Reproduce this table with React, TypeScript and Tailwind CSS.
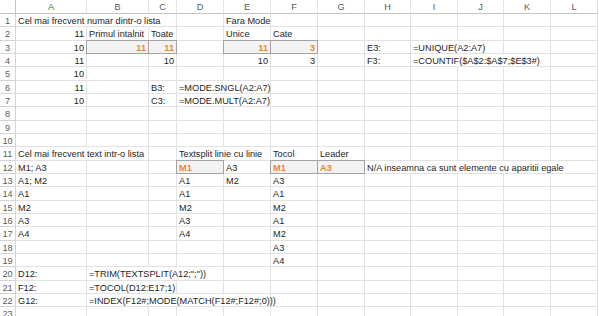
import React from 'react';

type Cell = {
	c: number;
	t: string;
	span?: number;
	num?: boolean;
	box?: boolean;
	hl?: boolean;
};

const LETTERS = ['A', 'B', 'C', 'D', 'E', 'F', 'G', 'H', 'I', 'J', 'K', 'L'];

const SPAN: Record<number, string> = {
	1: '',
	2: 'col-span-2',
	3: 'col-span-3',
	4: 'col-span-4',
	5: 'col-span-5',
};

// column index: A=0, B=1, ...
const SHEET: Record<number, Cell[]> = {
	1: [
		{c: 0, t: 'Cel mai frecvent numar dintr-o lista', span: 3},
		{c: 4, t: 'Fara Mode'},
	],
	2: [
		{c: 0, t: '11', num: true},
		{c: 1, t: 'Primul intalnit'},
		{c: 2, t: 'Toate'},
		{c: 4, t: 'Unice'},
		{c: 5, t: 'Cate'},
	],
	3: [
		{c: 0, t: '10', num: true},
		{c: 1, t: '11', num: true, box: true, hl: true},
		{c: 2, t: '11', num: true, box: true, hl: true},
		{c: 4, t: '11', num: true, box: true, hl: true},
		{c: 5, t: '3', num: true, box: true, hl: true},
		{c: 7, t: 'E3:'},
		{c: 8, t: '=UNIQUE(A2:A7)', span: 2},
	],
	4: [
		{c: 0, t: '11', num: true},
		{c: 2, t: '10', num: true},
		{c: 4, t: '10', num: true},
		{c: 5, t: '3', num: true},
		{c: 7, t: 'F3:'},
		{c: 8, t: '=COUNTIF($A$2:$A$7;$E$3#)', span: 3},
	],
	5: [{c: 0, t: '10', num: true}],
	6: [
		{c: 0, t: '11', num: true},
		{c: 2, t: 'B3:'},
		{c: 3, t: '=MODE.SNGL(A2:A7)', span: 2},
	],
	7: [
		{c: 0, t: '10', num: true},
		{c: 2, t: 'C3:'},
		{c: 3, t: '=MODE.MULT(A2:A7)', span: 2},
	],
	11: [
		{c: 0, t: 'Cel mai frecvent text intr-o lista', span: 2},
		{c: 3, t: 'Textsplit linie cu linie', span: 2},
		{c: 5, t: 'Tocol'},
		{c: 6, t: 'Leader'},
	],
	12: [
		{c: 0, t: 'M1; A3'},
		{c: 3, t: 'M1', box: true, hl: true},
		{c: 4, t: 'A3'},
		{c: 5, t: 'M1', box: true, hl: true},
		{c: 6, t: 'A3', box: true, hl: true},
		{c: 7, t: 'N/A inseamna ca sunt elemente cu aparitii egale', span: 5},
	],
	13: [
		{c: 0, t: 'A1; M2'},
		{c: 3, t: 'A1'},
		{c: 4, t: 'M2'},
		{c: 5, t: 'A3'},
	],
	14: [
		{c: 0, t: 'A1'},
		{c: 3, t: 'A1'},
		{c: 5, t: 'A1'},
	],
	15: [
		{c: 0, t: 'M2'},
		{c: 3, t: 'M2'},
		{c: 5, t: 'M2'},
	],
	16: [
		{c: 0, t: 'A3'},
		{c: 3, t: 'A3'},
		{c: 5, t: 'A1'},
	],
	17: [
		{c: 0, t: 'A4'},
		{c: 3, t: 'A4'},
		{c: 5, t: 'M2'},
	],
	18: [{c: 5, t: 'A3'}],
	19: [{c: 5, t: 'A4'}],
	20: [
		{c: 0, t: 'D12:'},
		{c: 1, t: '=TRIM(TEXTSPLIT(A12;";"))', span: 3},
	],
	21: [
		{c: 0, t: 'F12:'},
		{c: 1, t: '=TOCOL(D12:E17;1)', span: 2},
	],
	22: [
		{c: 0, t: 'G12:'},
		{c: 1, t: '=INDEX(F12#;MODE(MATCH(F12#;F12#;0)))', span: 4},
	],
};

function Row({n}: {n: number}) {
	const cells = SHEET[n] ?? [];
	const out: React.ReactNode[] = [];
	let col = 0;
	while (col < LETTERS.length) {
		const cell = cells.find((x) => x.c === col);
		const span = cell?.span ?? 1;
		out.push(
			<div
				key={col}
				className={`relative flex items-end border-r border-b border-[#e2e2e2] ${SPAN[span]} ${
					cell?.num ? 'justify-end pr-[2px]' : 'pl-[2px]'
				} ${cell?.box ? 'bg-[#f2f2f2]' : ''}`}
			>
				{cell && (
					<span
						className={`whitespace-nowrap leading-none ${
							cell.hl ? 'text-[#f0862a] font-bold' : 'text-[#1e1e1e]'
						}`}
					>
						{cell.t}
					</span>
				)}
				{cell?.box && (
					<div className="pointer-events-none absolute -left-px -top-px -right-px -bottom-px border border-[#a3a3a3]" />
				)}
			</div>
		);
		col += span;
	}

	return (
		<>
			<div className="flex items-end justify-center border-r border-b border-[#d4d4d4] text-[#5c5c5c]">
				<span className="leading-none">{n}</span>
			</div>
			{out}
		</>
	);
}

export default function App() {
	const rows = Array.from({length: 23}, (_, i) => i + 1);

	return (
		<div className="w-[599px] h-[316px] overflow-hidden bg-white" style={{fontFamily: '"Liberation Sans", Arial, sans-serif'}}>
			<div className="grid grid-cols-[16px_71px_62px_28px_47px_47px_47px_47px_46px_47px_46px_47px_47px] grid-rows-[14px_repeat(23,13.333px)] text-[9.2px]">
				{/* Column headers */}
				<div className="border-r border-b border-[#c4c4c4]" />
				{LETTERS.map((l) => (
					<div
						key={l}
						className={`flex items-end justify-center pb-[1px] border-r border-b border-r-[#e2e2e2] border-b-[#c4c4c4] ${
							l === 'A' ? 'text-[#3e7b52]' : 'text-[#5c5c5c]'
						}`}
					>
						<span className="leading-none">{l}</span>
					</div>
				))}

				{/* Sheet rows */}
				{rows.map((n) => (
					<Row key={n} n={n} />
				))}
			</div>
		</div>
	);
}
